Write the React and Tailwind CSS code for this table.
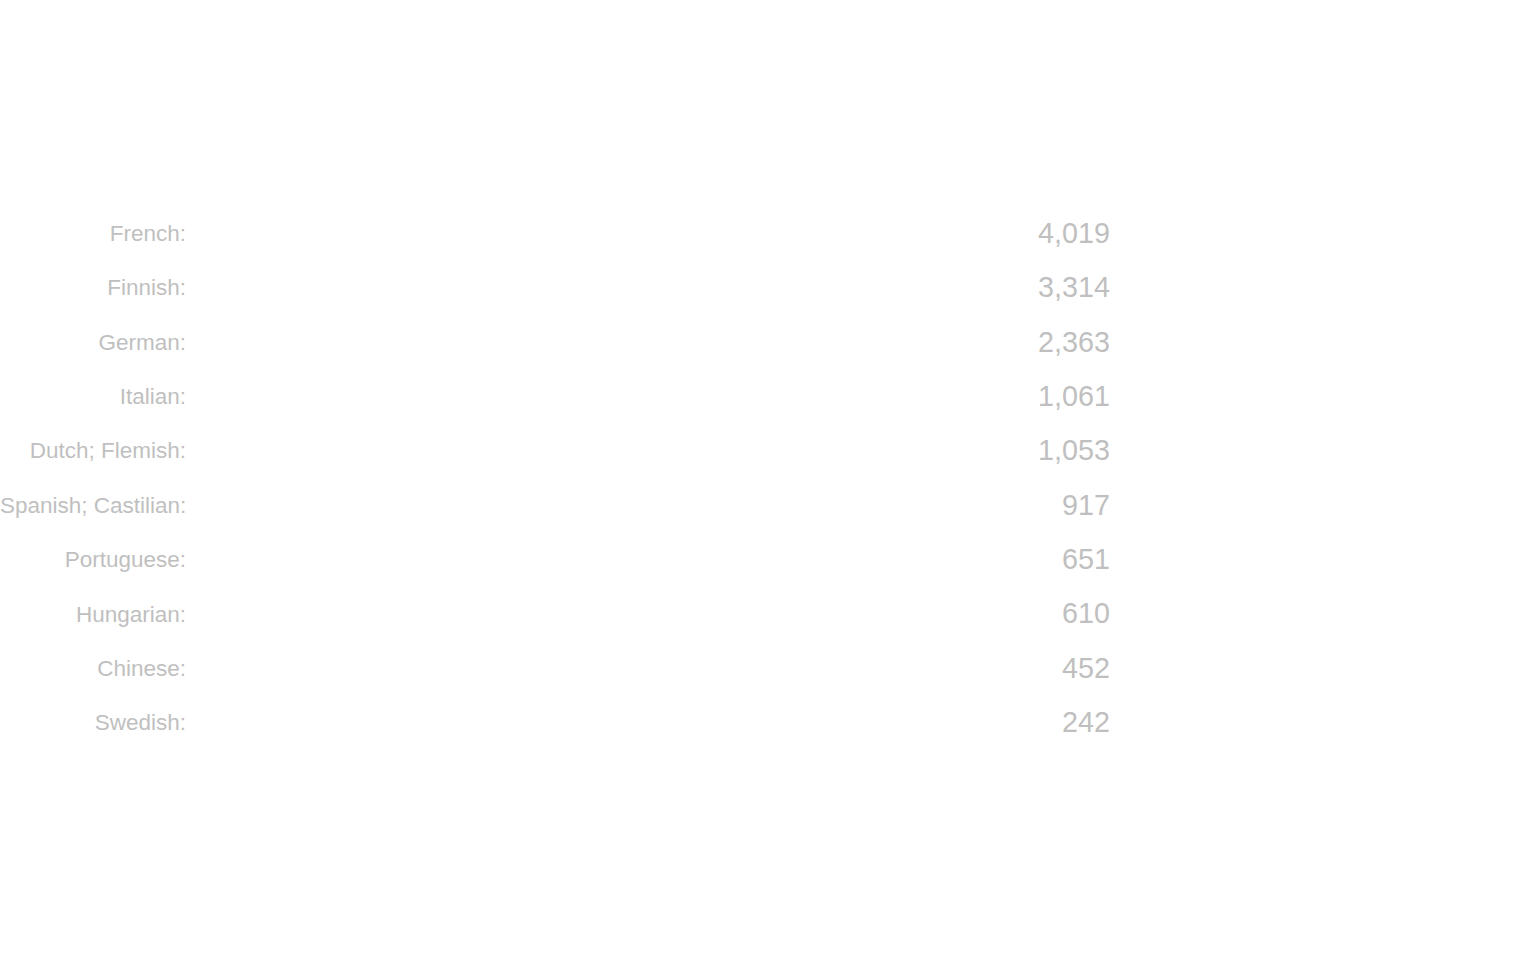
export default function App() {
  const rows = [
    ["French:", "4,019"],
    ["Finnish:", "3,314"],
    ["German:", "2,363"],
    ["Italian:", "1,061"],
    ["Dutch; Flemish:", "1,053"],
    ["Spanish; Castilian:", "917"],
    ["Portuguese:", "651"],
    ["Hungarian:", "610"],
    ["Chinese:", "452"],
    ["Swedish:", "242"],
  ];
  return (
    <div className="w-[1536px] h-[960px] bg-white pt-[206px]" style={{ fontFamily: '"Liberation Sans", Arial, sans-serif' }}>
      <div className="flex flex-col w-[1110px]">
        {rows.map(([l, n]) => (
          <div key={l} className="flex items-center h-[54.375px] text-[#bfbfbf]">
            <div className="w-[186px] mt-[2px] text-right text-[22.5px] leading-none whitespace-nowrap">{l}</div>
            <div className="flex-1 text-right text-[28.75px] leading-none">{n}</div>
          </div>
        ))}
      </div>
    </div>
  );
}
